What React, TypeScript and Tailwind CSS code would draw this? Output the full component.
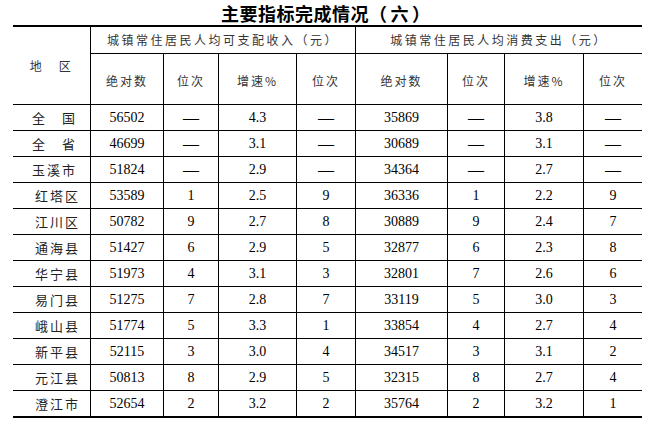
import * as React from 'react'
import clsx from 'clsx'

const cjk = "font-['Noto_Sans_CJK_SC',sans-serif]"
const serif = "font-['Liberation_Serif','Noto_Sans_CJK_SC',serif]"

// region, income: abs, rank, growth, rank, spend: abs, rank, growth, rank
const rows: string[][] = [
  ['全　国', '56502', '—', '4.3', '—', '35869', '—', '3.8', '—'],
  ['全　省', '46699', '—', '3.1', '—', '30689', '—', '3.1', '—'],
  ['玉溪市', '51824', '—', '2.9', '—', '34364', '—', '2.7', '—'],
  ['红塔区', '53589', '1', '2.5', '9', '36336', '1', '2.2', '9'],
  ['江川区', '50782', '9', '2.7', '8', '30889', '9', '2.4', '7'],
  ['通海县', '51427', '6', '2.9', '5', '32877', '6', '2.3', '8'],
  ['华宁县', '51973', '4', '3.1', '3', '32801', '7', '2.6', '6'],
  ['易门县', '51275', '7', '2.8', '7', '33119', '5', '3.0', '3'],
  ['峨山县', '51774', '5', '3.3', '1', '33854', '4', '2.7', '4'],
  ['新平县', '52115', '3', '3.0', '4', '34517', '3', '3.1', '2'],
  ['元江县', '50813', '8', '2.9', '5', '32315', '8', '2.7', '4'],
  ['澄江市', '52654', '2', '3.2', '2', '35764', '2', '3.2', '1'],
]

const subHeads = ['绝对数', '位次', '增速%', '位次', '绝对数', '位次', '增速%', '位次']

export default function App() {
  return (
    <div className="w-[658px] h-[428px] bg-white text-black">
      <div className={clsx('h-[25px] flex items-center pl-[221px] text-[18px] font-bold leading-none tracking-[0.5px]', cjk)}>
        主要指标完成情况（<span className="px-[3px]">六</span>）
      </div>
      <div className="ml-[13px] w-[629px] border-t-2 border-black grid grid-cols-[78px_73px_55px_78px_59px_92px_57px_79px_58px] grid-rows-[27px_51px_repeat(11,26px)_27px]">
        <div className={clsx('row-span-2 flex items-center justify-center border-r border-b border-black text-[12px] tracking-[2.5px] text-[#333]', cjk)}>
          地　区
        </div>
        <div className={clsx('col-span-4 flex items-center justify-center border-r border-b border-black text-[12px] tracking-[2.5px] text-[#333]', cjk)}>
          城镇常住居民人均可支配收入（元）
        </div>
        <div className={clsx('col-span-4 flex items-center justify-center border-b border-black text-[12px] tracking-[2.5px] text-[#333]', cjk)}>
          城镇常住居民人均消费支出（元）
        </div>
        {subHeads.map((h, i) => (
          <div
            key={i}
            className={clsx(
              'flex items-center justify-center pt-[3px] border-b border-black text-[12px] tracking-[2px] text-[#333]',
              i < 7 && 'border-r',
              cjk,
            )}
          >
            {h}
          </div>
        ))}
        {rows.map((r, ri) => {
          const last = ri === rows.length - 1
          return r.map((v, ci) => (
            <div
              key={`${ri}-${ci}`}
              className={clsx(
                'flex items-center border-black',
                last ? 'border-b-2' : 'border-b',
                ci < 8 && 'border-r',
                ci === 0
                  ? clsx('text-[13px] tracking-[2px] text-[#222]', cjk, ri < 3 ? 'pl-[19px]' : 'pl-[22px]')
                  : clsx('justify-center text-[14px]', serif),
              )}
            >
              {v === '—' ? <span className="text-[16px]">—</span> : v}
            </div>
          ))
        })}
      </div>
    </div>
  )
}
